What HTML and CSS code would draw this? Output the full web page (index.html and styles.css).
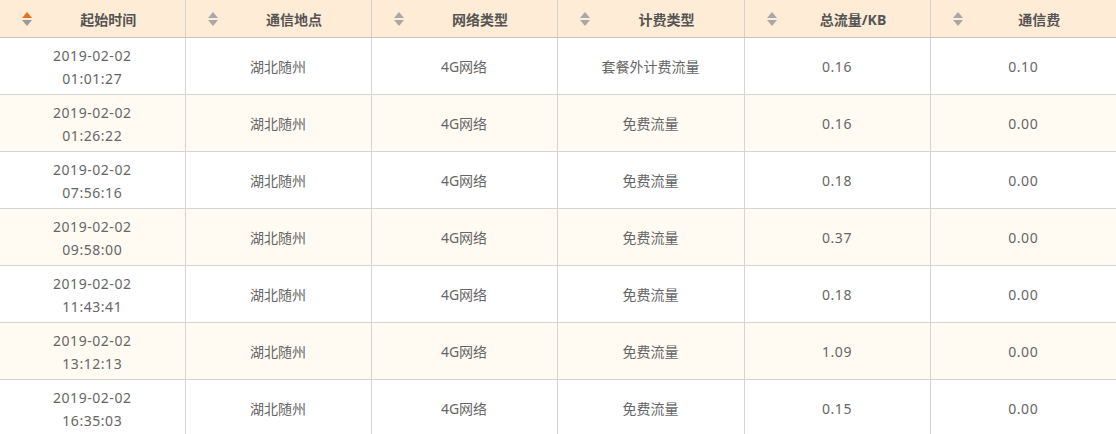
FILE: index.html
```html
<!DOCTYPE html>
<html lang="zh-CN">
<head>
<meta charset="utf-8">
<title>通信记录</title>
<link rel="stylesheet" href="styles.css">
</head>
<body>
<table class="records">
  <colgroup>
    <col class="c1"><col class="c2"><col class="c3"><col class="c4"><col class="c5"><col class="c6">
  </colgroup>
  <thead>
    <tr>
      <th><div class="th-in"><span class="sort active"><i class="up"></i><i class="down"></i></span><span class="label">起始时间</span></div></th>
      <th><div class="th-in"><span class="sort"><i class="up"></i><i class="down"></i></span><span class="label">通信地点</span></div></th>
      <th><div class="th-in"><span class="sort"><i class="up"></i><i class="down"></i></span><span class="label">网络类型</span></div></th>
      <th><div class="th-in"><span class="sort"><i class="up"></i><i class="down"></i></span><span class="label">计费类型</span></div></th>
      <th><div class="th-in"><span class="sort"><i class="up"></i><i class="down"></i></span><span class="label">总流量/KB</span></div></th>
      <th><div class="th-in"><span class="sort"><i class="up"></i><i class="down"></i></span><span class="label">通信费</span></div></th>
    </tr>
  </thead>
  <tbody>
    <tr><td class="num">2019-02-02<br>01:01:27</td><td>湖北随州</td><td>4G网络</td><td>套餐外计费流量</td><td class="num">0.16</td><td class="num">0.10</td></tr>
    <tr><td class="num">2019-02-02<br>01:26:22</td><td>湖北随州</td><td>4G网络</td><td>免费流量</td><td class="num">0.16</td><td class="num">0.00</td></tr>
    <tr><td class="num">2019-02-02<br>07:56:16</td><td>湖北随州</td><td>4G网络</td><td>免费流量</td><td class="num">0.18</td><td class="num">0.00</td></tr>
    <tr><td class="num">2019-02-02<br>09:58:00</td><td>湖北随州</td><td>4G网络</td><td>免费流量</td><td class="num">0.37</td><td class="num">0.00</td></tr>
    <tr><td class="num">2019-02-02<br>11:43:41</td><td>湖北随州</td><td>4G网络</td><td>免费流量</td><td class="num">0.18</td><td class="num">0.00</td></tr>
    <tr><td class="num">2019-02-02<br>13:12:13</td><td>湖北随州</td><td>4G网络</td><td>免费流量</td><td class="num">1.09</td><td class="num">0.00</td></tr>
    <tr><td class="num">2019-02-02<br>16:35:03</td><td>湖北随州</td><td>4G网络</td><td>免费流量</td><td class="num">0.15</td><td class="num">0.00</td></tr>
  </tbody>
</table>
</body>
</html>
```
FILE: styles.css
```css
html, body {
  margin: 0;
  padding: 0;
  background: #fff;
}
body {
  font-family: "Noto Sans", "Noto Sans CJK SC", sans-serif;
  font-size: 14px;
  color: #666;
  overflow: hidden;
}
.records {
  width: 1116px;
  border-collapse: collapse;
  table-layout: fixed;
}
.c1 { width: 185px; }
.c2 { width: 186px; }
.c3 { width: 186px; }
.c4 { width: 187px; }
.c5 { width: 186px; }
.c6 { width: 186px; }
.records th {
  height: 37px;
  padding: 0;
  background: #feecd6;
  border-left: 1px solid #d4d0cc;
  border-bottom: 1px solid #c8c4c0;
  font-weight: bold;
  color: #555;
}
.records th:first-child,
.records td:first-child {
  border-left: none;
}
.th-in {
  display: flex;
  align-items: center;
  padding-left: 22px;
}
.label {
  flex: 1;
  text-align: center;
}
.sort {
  display: flex;
  flex-direction: column;
  align-items: center;
  gap: 2px;
  width: 10px;
}
.sort i {
  display: block;
  width: 0;
  height: 0;
  border-left: 5px solid transparent;
  border-right: 5px solid transparent;
}
.sort .up {
  border-bottom: 6px solid #a8a8a8;
}
.sort .down {
  border-top: 6px solid #a8a8a8;
}
.sort.active .up {
  border-bottom-color: #e8731f;
}
.sort.active .down {
  border-top-color: #9a9a9a;
}
.records td {
  height: 55px;
  padding: 1px 0 0;
  text-align: center;
  line-height: 23px;
  color: #666;
  border-left: 1px solid #d4d4d4;
  border-bottom: 1px solid #d4d4d4;
}
.records td.num {
  letter-spacing: 0.55px;
}
.records tbody tr:nth-child(even) td {
  background: #fffbf3;
}
```
